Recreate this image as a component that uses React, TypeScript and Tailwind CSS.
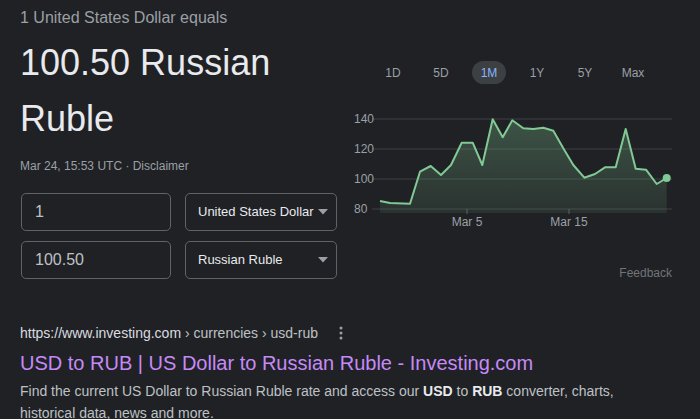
import React from 'react'

const points: [number, number][] = [
  [30, 101], [40, 103], [60, 103.7], [70, 71.7], [80.7, 66], [91, 75], [101, 65],
  [111.7, 42.7], [122.7, 42.7], [132.3, 65], [142.7, 19.3], [152.7, 37.3], [162.3, 20.3],
  [173.3, 28.3], [183.3, 29], [193.3, 27.7], [203.3, 30.7], [213.3, 48.3], [223.3, 65],
  [234.3, 77.7], [245, 74], [255, 67.3], [265.7, 67.3], [275.7, 29], [285.7, 68.7],
  [296, 69.7], [306.7, 84], [316.7, 78],
]

const ranges = ['1D', '5D', '1M', '1Y', '5Y', 'Max']

function Caret() {
  return (
    <svg width="10" height="6" viewBox="0 0 10 6" className="shrink-0">
      <path d="M0 0h10L5 5.5z" fill="#9aa0a6" />
    </svg>
  )
}

function Chart() {
  const line = points.map(([x, y], i) => `${i === 0 ? 'M' : 'L'}${x} ${y}`).join(' ')
  const last = points[points.length - 1]
  const area = `${line} L${last[0]} 113 L${points[0][0]} 113 Z`
  const grid = [
    { label: '140', y: 19 },
    { label: '120', y: 49 },
    { label: '100', y: 79 },
    { label: '80', y: 109 },
  ]

  return (
    <svg width="330" height="130" viewBox="0 0 330 130" className="block">
      <defs>
        <linearGradient id="fill" x1="0" y1="0" x2="0" y2="1">
          <stop offset="0%" stopColor="#81c995" stopOpacity="0.3" />
          <stop offset="100%" stopColor="#81c995" stopOpacity="0.1" />
        </linearGradient>
      </defs>
      {grid.map((g) => (
        <g key={g.label}>
          <line x1="22" x2="322" y1={g.y} y2={g.y} stroke="#3c4043" strokeWidth="1" />
          <text x="4" y={g.y + 4} fontSize="12" fill="#9aa0a6">
            {g.label}
          </text>
        </g>
      ))}
      <path d={area} fill="url(#fill)" />
      <path d={line} fill="none" stroke="#81c995" strokeWidth="2" strokeLinejoin="round" />
      <circle cx={last[0]} cy={last[1]} r="4" fill="#81c995" />
      <line x1="117" x2="117" y1="109" y2="114" stroke="#5f6368" />
      <line x1="219" x2="219" y1="109" y2="114" stroke="#5f6368" />
      <text x="117" y="126" fontSize="12" fill="#9aa0a6" textAnchor="middle">
        Mar 5
      </text>
      <text x="219" y="126" fontSize="12" fill="#9aa0a6" textAnchor="middle">
        Mar 15
      </text>
    </svg>
  )
}

export default function App() {
  return (
    <div className="w-[700px] h-[419px] overflow-hidden bg-[#202124] font-['Liberation_Sans',Arial,sans-serif]">
      <div className="flex h-[322px]">
        {/* converter */}
        <div className="ml-[20px] w-[317px]">
          <div className="mt-[6px] text-[16px] leading-[24px] text-[#9aa0a6]">
            1 United States Dollar equals
          </div>
          <div className="mt-[5px] text-[36px] leading-[56px] text-[#e8eaed]">
            100.50 Russian Ruble
          </div>
          <div className="mt-[11px] text-[12px] leading-[16px] text-[#9aa0a6]">
            Mar 24, 15:53 UTC · Disclaimer
          </div>
          <div className="mt-[19px] ml-[1px] flex flex-col gap-[10px]">
            <div className="flex gap-[14px]">
              <div className="flex h-[38px] w-[150px] items-center rounded-[5px] border border-[#5f6368] pl-[13px] text-[16px] text-[#bdc1c6]">
                1
              </div>
              <div className="flex h-[38px] w-[152px] items-center justify-between rounded-[5px] border border-[#5f6368] pl-[12px] pr-[8px] text-[13px] text-[#e8eaed]">
                <span className="whitespace-nowrap">United States Dollar</span>
                <Caret />
              </div>
            </div>
            <div className="flex gap-[14px]">
              <div className="flex h-[38px] w-[150px] items-center rounded-[5px] border border-[#5f6368] pl-[13px] text-[16px] text-[#bdc1c6]">
                100.50
              </div>
              <div className="flex h-[38px] w-[152px] items-center justify-between rounded-[5px] border border-[#5f6368] pl-[12px] pr-[8px] text-[13px] text-[#e8eaed]">
                <span>Russian Ruble</span>
                <Caret />
              </div>
            </div>
          </div>
        </div>

        {/* chart */}
        <div className="ml-[13px] w-[330px]">
          <div className="mt-[61px] ml-[19px] flex">
            {ranges.map((r) => (
              <div key={r} className="flex w-[48px] justify-center">
                <span
                  className={
                    r === '1M'
                      ? 'flex h-[23px] w-[34px] items-center justify-center rounded-full bg-[#3c4043] text-[12px] text-[#8ab4f8]'
                      : 'flex h-[23px] items-center text-[12px] text-[#9aa0a6]'
                  }
                >
                  {r}
                </span>
              </div>
            ))}
          </div>
          <div className="mt-[16px]">
            <Chart />
          </div>
          <div className="mt-[35px] pr-[8px] text-right text-[12px] leading-[16px] text-[#70757a]">
            Feedback
          </div>
        </div>
      </div>

      {/* search result */}
      <div className="ml-[20px] w-[600px]">
        <div className="flex items-center text-[14px] leading-[22px]">
          <span className="text-[#dadce0]">https://www.investing.com</span>
          <span className="text-[#bdc1c6]">&nbsp;› currencies › usd-rub</span>
          <svg width="4" height="14" viewBox="0 0 4 14" className="ml-[21px]">
            <circle cx="2" cy="2" r="1.5" fill="#9aa0a6" />
            <circle cx="2" cy="7" r="1.5" fill="#9aa0a6" />
            <circle cx="2" cy="12" r="1.5" fill="#9aa0a6" />
          </svg>
        </div>
        <div className="mt-[6px] text-[20px] leading-[26px] text-[#c58af9]">
          USD to RUB | US Dollar to Russian Ruble - Investing.com
        </div>
        <div className="mt-[4px] text-[14px] leading-[22px] text-[#bdc1c6]">
          Find the current US Dollar to Russian Ruble rate and access our{' '}
          <b className="text-[#e8eaed]">USD</b> to <b className="text-[#e8eaed]">RUB</b> converter, charts,
          historical data, news and more.
        </div>
      </div>
    </div>
  )
}
